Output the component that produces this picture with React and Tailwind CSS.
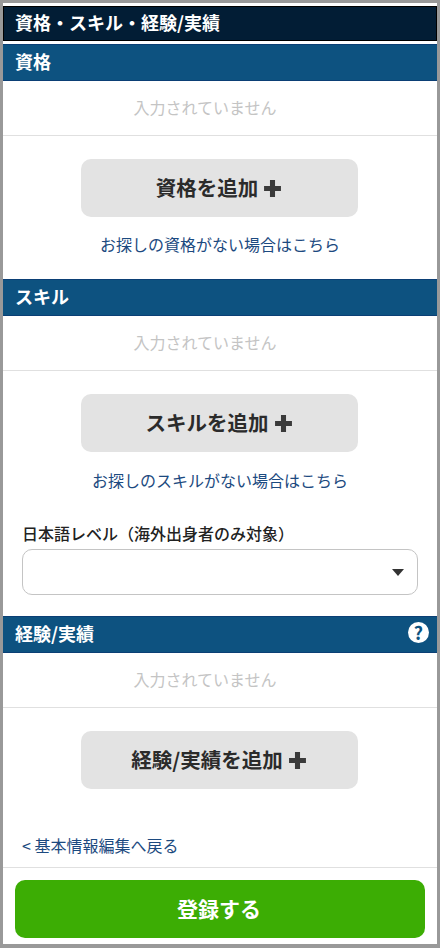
const FONT = "font-['Noto_Sans_CJK_JP','Noto_Sans',sans-serif]";

function SectionHeader({ title, help = false }) {
  return (
    <div className="flex h-[37px] items-center justify-between bg-[#0d5280] border-y border-[#0b3f75] pl-[12px] pr-[8px]">
      <span className="pb-[2px] text-[18px] font-bold text-white">{title}</span>
      {help && (
        <span className="mb-[5px] flex h-[21px] w-[21px] items-center justify-center rounded-full bg-white text-[18px] font-bold leading-none text-[#0d5280]">
          ?
        </span>
      )}
    </div>
  );
}

function EmptyRow({ first = false }) {
  return (
    <div className={`flex items-center justify-center border-b border-[#e0e0e0] pb-[2px] pr-[30px] text-[16px] text-[#c4c4c4] ${first ? "h-[56px]" : "h-[55px]"}`}>
      入力されていません
    </div>
  );
}

function AddButton({ label }) {
  return (
    <button className="mx-auto flex h-[58px] w-[277px] -translate-x-[1px] items-center justify-center gap-[5px] rounded-[10px] bg-[#e3e3e3] pb-[1px] text-[20.5px] font-bold text-[#2b2b2b]">
      {label}
      <svg width="19" height="19" viewBox="0 0 18 18" className="mt-[2px]">
        <path d="M6.6 1h4.8v5.6H17v4.8h-5.6V17H6.6v-5.6H1V6.6h5.6z" fill="#3a3a3a" />
      </svg>
    </button>
  );
}

export default function App() {
  return (
    <div className={`${FONT} flex h-[948px] w-[440px] flex-col border-x-[3px] border-y-[3px] border-b-[4px] border-[#999] bg-white`}>
      <div className="pt-[3px]">
        <div className="flex h-[35px] items-center bg-[#021d35] border border-black pb-[2px] pl-[11px] text-[18px] font-bold text-white">
          資格・スキル・経験/実績
        </div>
      </div>
      <div className="pt-[3px]">
        <div className="h-[36px]">
          <SectionHeader title="資格" />
        </div>
      </div>
      <EmptyRow first />
      <div className="pt-[23px]">
        <AddButton label="資格を追加" />
      </div>
      <p className="mt-[16px] text-center text-[16px] leading-[22px] text-[#1c4a80]">お探しの資格がない場合はこちら</p>
      <div className="mt-[24px]">
        <SectionHeader title="スキル" />
      </div>
      <EmptyRow />
      <div className="pt-[23px]">
        <AddButton label="スキルを追加" />
      </div>
      <p className="mt-[17px] text-center text-[16px] leading-[22px] text-[#1c4a80]">お探しのスキルがない場合はこちら</p>
      <div className="mt-[31px] px-[19px]">
        <label className="block text-[16px] font-medium leading-[22px] text-[#222]">日本語レベル（海外出身者のみ対象）</label>
        <div className="mt-[5px] flex h-[46px] items-center justify-end rounded-[10px] border border-[#c4c4c4] bg-white pr-[13px]">
          <svg width="12" height="7" viewBox="0 0 12 7">
            <path d="M0 0h12L6 7z" fill="#333" />
          </svg>
        </div>
      </div>
      <div className="mt-[21px]">
        <SectionHeader title="経験/実績" help />
      </div>
      <EmptyRow />
      <div className="pt-[23px]">
        <AddButton label="経験/実績を追加" />
      </div>
      <p className="mt-[45px] px-[19px] text-[16px] leading-[22px] text-[#1c4a80]">&lt; 基本情報編集へ戻る</p>
      <div className="mt-[11px] border-t border-[#e0e0e0] px-[12px] pt-[12px]">
        <button className="flex h-[58px] w-full items-center justify-center rounded-[10px] bg-[#3cad04] pb-[1px] pr-[2px] text-[21px] font-bold text-white">
          登録する
        </button>
      </div>
    </div>
  );
}
